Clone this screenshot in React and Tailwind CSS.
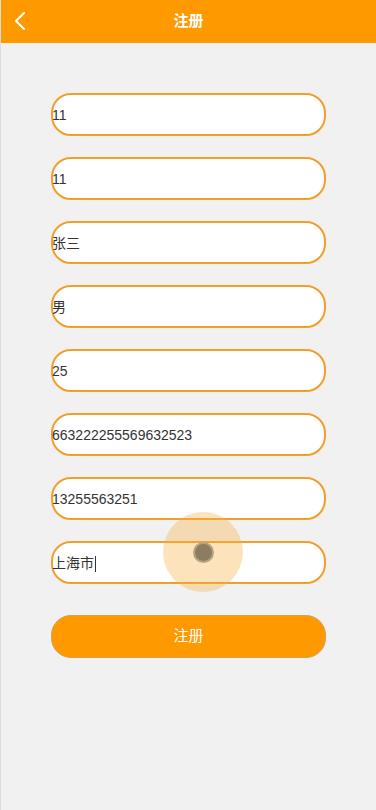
import React from 'react';

const fields = ['11', '11', '张三', '男', '25', '663222255569632523', '13255563251', '上海市'];

export default function App() {
  return (
    <div
      className="relative min-h-[810px] bg-[#f1f1f1] border-l border-[#dcdcdc]"
      style={{ fontFamily: '"Liberation Sans", Arial, "Noto Sans CJK SC", sans-serif' }}
    >
      <div className="relative h-[43px] bg-[#ff9900] flex items-center justify-center">
        <svg className="absolute left-[12px] top-[11px]" width="14" height="20" viewBox="0 0 14 20" fill="none">
          <path d="M11 2 L3 10 L11 18" stroke="#fff" strokeWidth="2" strokeLinecap="round" strokeLinejoin="round" />
        </svg>
        <span className="text-white text-[15px] font-bold">注册</span>
      </div>

      <div className="flex flex-col items-center pt-[50px]">
        {fields.map((v, i) => (
          <div
            key={i}
            className="w-[275px] h-[43px] mb-[21px] bg-white border-2 border-[#f0a02a] rounded-[20px] flex items-center pt-[2px]"
          >
            <span className="text-[14px] text-[#333] ml-[-1px]">
              {v}
              {i === fields.length - 1 && <span className="inline-block w-px h-[16px] bg-[#333] align-middle ml-px" />}
            </span>
          </div>
        ))}
        <button className="mt-[10px] w-[275px] h-[43px] rounded-[20px] bg-[#ff9900] border border-[#d9a050] text-white text-[15px]">
          注册
        </button>
      </div>

      <div className="absolute left-[162px] top-[512px] w-[80px] h-[80px] rounded-full bg-[#f5b040]/35 flex items-center justify-center">
        <div className="w-[21px] h-[21px] rounded-full bg-[#8c7d62] border-2 border-[#b3a383]" />
      </div>
    </div>
  );
}
